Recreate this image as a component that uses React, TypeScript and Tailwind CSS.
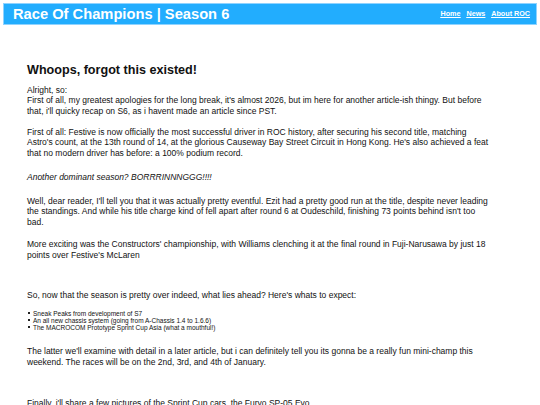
export default function App() {
  const f = { fontFamily: '"Liberation Sans", Arial, sans-serif' };
  const items = [
    "Sneak Peaks from development of S7",
    "An all new chassis system (going from A-Chassis 1.4 to 1.6.6)",
    "The MACROCOM Prototype Sprint Cup Asia (what a mouthful!)",
  ];
  return (
    <div className="min-h-[405px] bg-white text-[#111]" style={f}>
      <div className="p-[3px]">
        <div className="flex items-center justify-between h-[22px] bg-[#22adfe] border border-[#8fd3ff] pl-[9px] pr-[6px]">
          <div className="text-white font-bold text-[14.7px] leading-none">Race Of Champions | Season 6</div>
          <div className="flex gap-[6px] text-white font-bold text-[7.2px] leading-none underline">
            <a href="#">Home</a>
            <a href="#">News</a>
            <a href="#">About ROC</a>
          </div>
        </div>
      </div>
      <div className="pl-[27px] w-[490px] pt-[35px] text-[8.5px] leading-[10.5px]">
        <h2 className="text-[12.6px] font-bold leading-[14px] mb-[7.5px]">Whoops, forgot this existed!</h2>
        <p>Alright, so:<br />First of all, my greatest apologies for the long break, it's almost 2026, but im here for another article-ish thingy. But before that, i'll quicky recap on S6, as i havent made an article since PST.</p>
        <p className="mt-[10.5px]">First of all: Festive is now officially the most successful driver in ROC history, after securing his second title, matching Astro's count, at the 13th round of 14, at the glorious Causeway Bay Street Circuit in Hong Kong. He's also achieved a feat that no modern driver has before: a 100% podium record.</p>
        <p className="mt-[13.5px] italic">Another dominant season? BORRRINNNGGG!!!!</p>
        <p className="mt-[13.5px]">Well, dear reader, I'll tell you that it was actually pretty eventful. Ezit had a pretty good run at the title, despite never leading the standings. And while his title charge kind of fell apart after round 6 at Oudeschild, finishing 73 points behind isn't too bad.</p>
        <p className="mt-[12px]">More exciting was the Constructors' championship, with Williams clenching it at the final round in Fuji-Narusawa by just 18 points over Festive's McLaren</p>
        <p className="mt-[30px]">So, now that the season is pretty over indeed, what lies ahead? Here's whats to expect:</p>
        <ul className="mt-[9px] text-[6.5px] leading-[7px]">
          {items.map((t) => (
            <li key={t} className="flex items-center">
              <span className="w-[2px] h-[2px] bg-[#222] ml-[1px] mr-[3px] shrink-0" />
              <span>{t}</span>
            </li>
          ))}
        </ul>
        <p className="mt-[15.5px]">The latter we'll examine with detail in a later article, but i can definitely tell you its gonna be a really fun mini-champ this weekend. The races will be on the 2nd, 3rd, and 4th of January.</p>
        <p className="mt-[31px]">Finally, i'll share a few pictures of the Sprint Cup cars, the Furyo SP-05 Evo.</p>
      </div>
    </div>
  );
}
